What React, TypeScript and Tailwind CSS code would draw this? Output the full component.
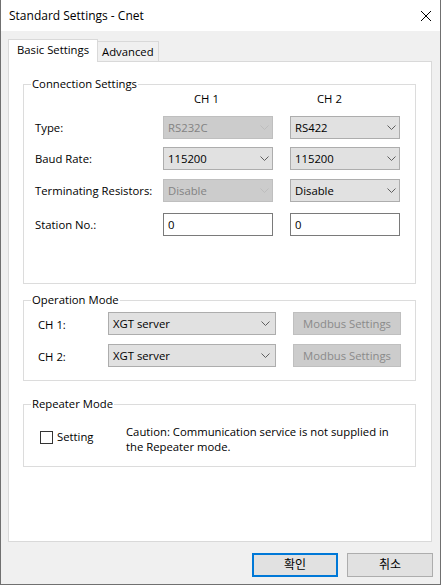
import clsx from "clsx";
import type { ReactNode } from "react";

function Chevron({ disabled }: { disabled?: boolean }) {
  return (
    <svg width="9" height="5" viewBox="0 0 9 5" fill="none" className="flex-none">
      <path
        d="M0.5 0.5 L4.5 4.5 L8.5 0.5"
        stroke={disabled ? "#bdbdbd" : "#5f5f5f"}
        strokeWidth="1"
      />
    </svg>
  );
}

function Combo({
  value,
  disabled,
  className,
}: {
  value: string;
  disabled?: boolean;
  className?: string;
}) {
  return (
    <div
      className={clsx(
        "flex h-[23px] flex-none items-center justify-between border pl-[4px] pr-[3px]",
        disabled
          ? "border-[#bfbfbf] bg-[#cccccc] text-[#838383]"
          : "border-[#adadad] bg-[#e1e1e1] text-black",
        className
      )}
    >
      <span>{value}</span>
      <Chevron disabled={disabled} />
    </div>
  );
}

function TextBox({ value, className }: { value: string; className?: string }) {
  return (
    <div
      className={clsx(
        "flex h-[23px] flex-none items-center border border-[#7a7a7a] bg-white pl-[4px]",
        className
      )}
    >
      {value}
    </div>
  );
}

function Group({
  title,
  className,
  children,
}: {
  title: string;
  className?: string;
  children: ReactNode;
}) {
  return (
    <fieldset className={clsx("w-[393px] border border-[#dcdcdc]", className)}>
      <legend className="ml-[7px] px-px leading-[14px]">{title}</legend>
      {children}
    </fieldset>
  );
}

function ChannelRow({
  label,
  className,
  children,
}: {
  label: string;
  className?: string;
  children: ReactNode;
}) {
  return (
    <div className={clsx("flex items-center", className)}>
      <div className="w-[139px] flex-none pl-[11px]">{label}</div>
      {children}
    </div>
  );
}

function ModeRow({ label, className }: { label: string; className?: string }) {
  return (
    <div className={clsx("flex items-center", className)}>
      <div className="w-[84px] flex-none pl-[14px] pt-[2px]">{label}</div>
      <Combo value="XGT server" className="w-[168px] pr-[5px]" />
      <div className="ml-[17px] flex h-[23px] w-[108px] items-center justify-center border border-[#bfbfbf] bg-[#cccccc] text-[#8a8a8a]">
        Modbus Settings
      </div>
    </div>
  );
}

export default function App() {
  return (
    <div className="flex h-[585px] w-[441px] flex-col border-x border-b border-[#707070] bg-[#f0f0f0] font-['Open_Sans',sans-serif] text-[11.3px] leading-4 text-black">
      {/* title bar */}
      <div className="flex h-[31px] flex-none items-center justify-between bg-white pl-[8px] pr-[9px] text-[12px]">
        <span>Standard Settings - Cnet</span>
        <svg width="10" height="10" viewBox="0 0 10 10" fill="none">
          <path d="M0 0 L10 10 M10 0 L0 10" stroke="#000" strokeWidth="1" />
        </svg>
      </div>

      <div className="flex flex-1 flex-col px-[7px] pt-[8px]">
        {/* tabs */}
        <div className="flex h-[22px] items-end">
          <div className="relative z-10 -mb-px h-[23px] w-[90px] border-x border-t border-[#d9d9d9] bg-white pl-[8px] pt-[2px]">
            Basic Settings
          </div>
          <div className="h-[20px] w-[61px] border-r border-t border-[#d9d9d9] pl-[4px] pt-[2px]">
            Advanced
          </div>
        </div>

        {/* tab page */}
        <div className="flex h-[481px] w-[424px] flex-col border border-[#d9d9d9] bg-white px-[14px] pt-[15px]">
          <Group title="Connection Settings" className="pb-[47px]">
            <div className="flex leading-[15px]">
              <div className="w-[139px] flex-none" />
              <div className="w-[110px] pl-[31px]">CH 1</div>
              <div className="ml-[17px] w-[110px] pl-[27px]">CH 2</div>
            </div>
            <ChannelRow label="Type:" className="mt-[10px]">
              <Combo value="RS232C" disabled className="w-[110px]" />
              <Combo value="RS422" className="ml-[17px] w-[110px]" />
            </ChannelRow>
            <ChannelRow label="Baud Rate:" className="mt-[8px]">
              <Combo value="115200" className="w-[110px]" />
              <Combo value="115200" className="ml-[17px] w-[110px]" />
            </ChannelRow>
            <ChannelRow label="Terminating Resistors:" className="mt-[9px]">
              <Combo value="Disable" disabled className="w-[110px]" />
              <Combo value="Disable" className="ml-[17px] w-[110px]" />
            </ChannelRow>
            <ChannelRow label="Station No.:" className="mt-[11px]">
              <TextBox value="0" className="w-[110px]" />
              <TextBox value="0" className="ml-[17px] w-[110px]" />
            </ChannelRow>
          </Group>

          <Group title="Operation Mode" className="mt-[9px] pb-[13px]">
            <ModeRow label="CH 1:" className="mt-[5px]" />
            <ModeRow label="CH 2:" className="mt-[9px]" />
          </Group>

          <Group title="Repeater Mode" className="mt-[16px] pb-[12px]">
            <div className="mt-[13px] flex items-start">
              <div className="ml-[16px] mt-[5px] flex h-4 w-[86px] flex-none items-center gap-[4px]">
                <div className="h-[13px] w-[13px] border border-[#333333] bg-white" />
                <span>Setting</span>
              </div>
              <p className="w-[276px] leading-[15px]">
                Caution: Communication service is not supplied in the Repeater mode.
              </p>
            </div>
          </Group>
        </div>

        {/* dialog buttons */}
        <div className="mt-[11px] flex justify-end gap-[9px] font-['Open_Sans','Noto_Sans_CJK_KR',sans-serif] text-[12px]">
          <button className="flex h-[24px] w-[86px] items-center justify-center border-2 border-[#0078d7] bg-[#e1e1e1]">
            확인
          </button>
          <button className="flex h-[24px] w-[86px] items-center justify-center border border-[#adadad] bg-[#e1e1e1]">
            취소
          </button>
        </div>
      </div>
    </div>
  );
}
